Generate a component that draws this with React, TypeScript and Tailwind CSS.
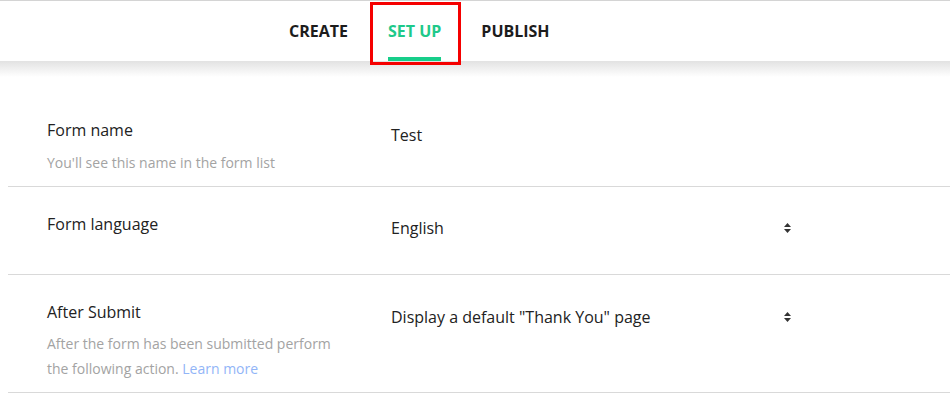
import React from "react";

function SortIcon() {
  return (
    <svg width="9" height="12" viewBox="0 0 9 12" className="block">
      <path d="M4.5 1 L8 5 L1 5 Z" fill="#333" />
      <path d="M4.5 11 L8 7 L1 7 Z" fill="#333" />
    </svg>
  );
}

function Row({
  label,
  sub,
  value,
  select,
  minH,
  subMt = "mt-[10px]",
  valuePt = "pt-[32px]",
}: {
  label: string;
  sub?: React.ReactNode;
  value: string;
  select?: boolean;
  minH?: string;
  subMt?: string;
  valuePt?: string;
}) {
  return (
    <div className={`flex border-b border-[#d9d9d9] ${minH ?? ""}`}>
      <div className="w-[383px] shrink-0 pl-[39px] pt-[27px] pb-[11px]">
        <div className="text-[16px] leading-[20px] text-[#222]">{label}</div>
        {sub && (
          <div className={`${subMt} w-[300px] text-[14px] leading-[25px] text-[#a3a3a3]`}>{sub}</div>
        )}
      </div>
      <div className={`flex w-[401px] items-start ${valuePt}`}>
        <div className="flex-1 text-[16px] leading-[20px] text-[#222]">{value}</div>
        {select && (
          <div className="pt-[4px]">
            <SortIcon />
          </div>
        )}
      </div>
    </div>
  );
}

export default function App() {
  return (
    <div
      className="h-[395px] w-[950px] overflow-hidden bg-white"
      style={{ fontFamily: '"Open Sans", "Noto Sans", sans-serif' }}
    >
      <div className="relative h-[61px] border-t border-[#d4d4d4] bg-white">
        <div className="flex h-full items-stretch pl-[269px]">
          {["CREATE", "SET UP", "PUBLISH"].map((t) => (
            <div key={t} className="flex h-full flex-col px-5">
              <div
                className={`flex flex-1 items-center pt-[3px] text-[16px] font-bold ${
                  t === "SET UP" ? "text-[#1ec98a]" : "text-[#1c1c1c]"
                }`}
              >
                {t}
              </div>
              <div className={`h-[4px] ${t === "SET UP" ? "bg-[#17ce8a]" : "bg-transparent"}`} />
            </div>
          ))}
        </div>
        <div className="absolute left-[370px] top-[1px] h-[63px] w-[91px] border-[3px] border-[#f50000]" />
      </div>
      <div className="h-[16px] bg-gradient-to-b from-[#e2e2e2] to-white" />
      <div className="h-[16px]" />
      <div className="pl-[8px]">
        <Row label="Form name" sub="You'll see this name in the form list" value="Test" />
        <Row label="Form language" value="English" select minH="h-[88px]" valuePt="pt-[31px]" />
        <Row
          label="After Submit"
          sub={
            <>
              After the form has been submitted perform the following action.{" "}
              <span className="text-[#92b5f7]">Learn more</span>
            </>
          }
          value={'Display a default "Thank You" page'}
          select
          subMt="mt-[9px]"
        />
      </div>
    </div>
  );
}
